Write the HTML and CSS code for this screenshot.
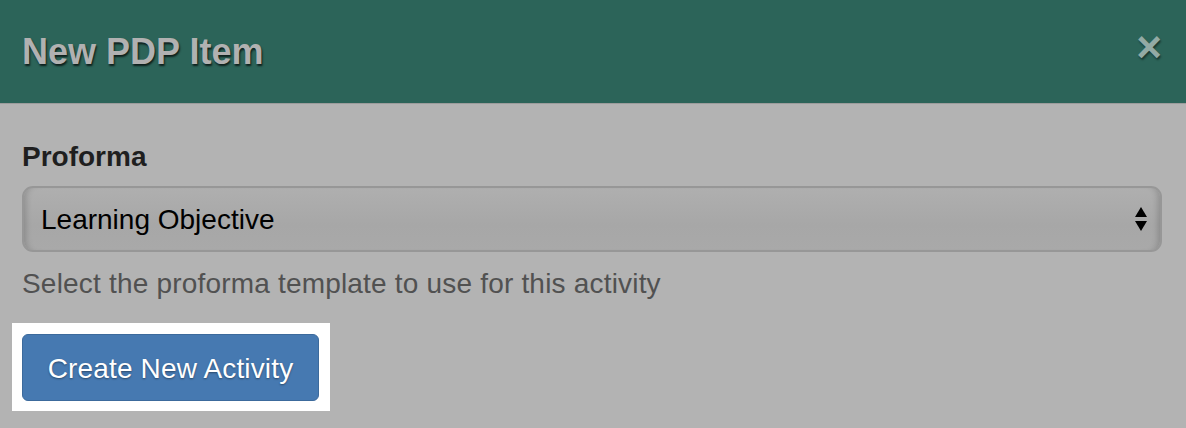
FILE: index.html
```html
<!DOCTYPE html>
<html lang="en">
<head>
  <meta charset="UTF-8">
  <title>New PDP Item</title>
  <link rel="stylesheet" href="styles.css">
</head>
<body>
  <div id="modal">
    <div class="modal-header">
      <h3>New PDP Item</h3>
      <span class="close">&times;</span>
    </div>

    <div class="modal-body">
      <label for="proforma">Proforma</label>
      <div class="select-wrap">
        <select id="proforma">
          <option>Learning Objective</option>
        </select>
        <svg class="select-arrows" width="14" height="26" viewBox="0 0 14 26">
          <polygon points="7,1 13,11 1,11" fill="#000"/>
          <polygon points="1,15 13,15 7,25" fill="#000"/>
        </svg>
      </div>
      <p class="help">Select the proforma template to use for this activity</p>

      <div class="spotlight">
        <button class="btn-primary">Create New Activity</button>
      </div>
    </div>
  </div>
</body>
</html>
```

FILE: styles.css
```css
body {
  margin: 0;
  padding: 0;
  background-color: #b3b3b3;
  font-family: "Liberation Sans", Arial, sans-serif;
}
.modal-header {
  height: 104px;
  box-sizing: border-box;
  padding: 0 24px 0 22px;
  display: flex;
  align-items: center;
  justify-content: space-between;
  background-color: #2c6459;
  border-bottom: 1px solid #9c9c9c;
}
.modal-header h3 {
  margin: 0;
  font-size: 36px;
  font-weight: bold;
  color: #b1b1b1;
  text-shadow: 1px 2px 2px rgba(0, 0, 0, 0.7);
}
.close {
  font-size: 44px;
  font-weight: bold;
  line-height: 1;
  color: #93aaa5;
  text-shadow: 1px 2px 2px rgba(0, 0, 0, 0.45);
  margin-top: -10px;
}
.modal-body {
  padding: 33px 24px 0 22px;
}
label {
  display: block;
  font-size: 28px;
  line-height: 40px;
  font-weight: bold;
  color: #1f1f1f;
  margin-bottom: 9px;
}
.select-wrap {
  position: relative;
}
select {
  -webkit-appearance: none;
  appearance: none;
  width: 100%;
  height: 66px;
  box-sizing: border-box;
  padding: 0 50px 0 17px;
  font-family: "Liberation Sans", Arial, sans-serif;
  font-size: 28px;
  color: #000;
  border: 2px solid #979797;
  border-radius: 11px;
  background: linear-gradient(#afafaf, #a7a7a7 60%, #a9a9a9);
  box-shadow: inset 7px 0 6px -5px rgba(0, 0, 0, 0.18), inset -7px 0 6px -5px rgba(0, 0, 0, 0.18);
}
.select-arrows {
  position: absolute;
  right: 14px;
  top: 20px;
}
.help {
  margin: 12px 0 0;
  font-size: 28px;
  line-height: 40px;
  letter-spacing: 0.19px;
  color: #515151;
}
.spotlight {
  display: inline-block;
  margin: 19px 0 0 -10px;
  padding: 11px 11px 10px 10px;
  background-color: #fff;
}
.btn-primary {
  display: block;
  width: 297px;
  height: 67px;
  padding: 2px 0 0;
  font-family: "Liberation Sans", Arial, sans-serif;
  font-size: 28px;
  letter-spacing: 0.15px;
  color: #fff;
  text-shadow: 0 1px 2px rgba(0, 0, 0, 0.4);
  background-color: #4679b1;
  border: 1px solid #3c6a9c;
  border-radius: 6px;
}
```
